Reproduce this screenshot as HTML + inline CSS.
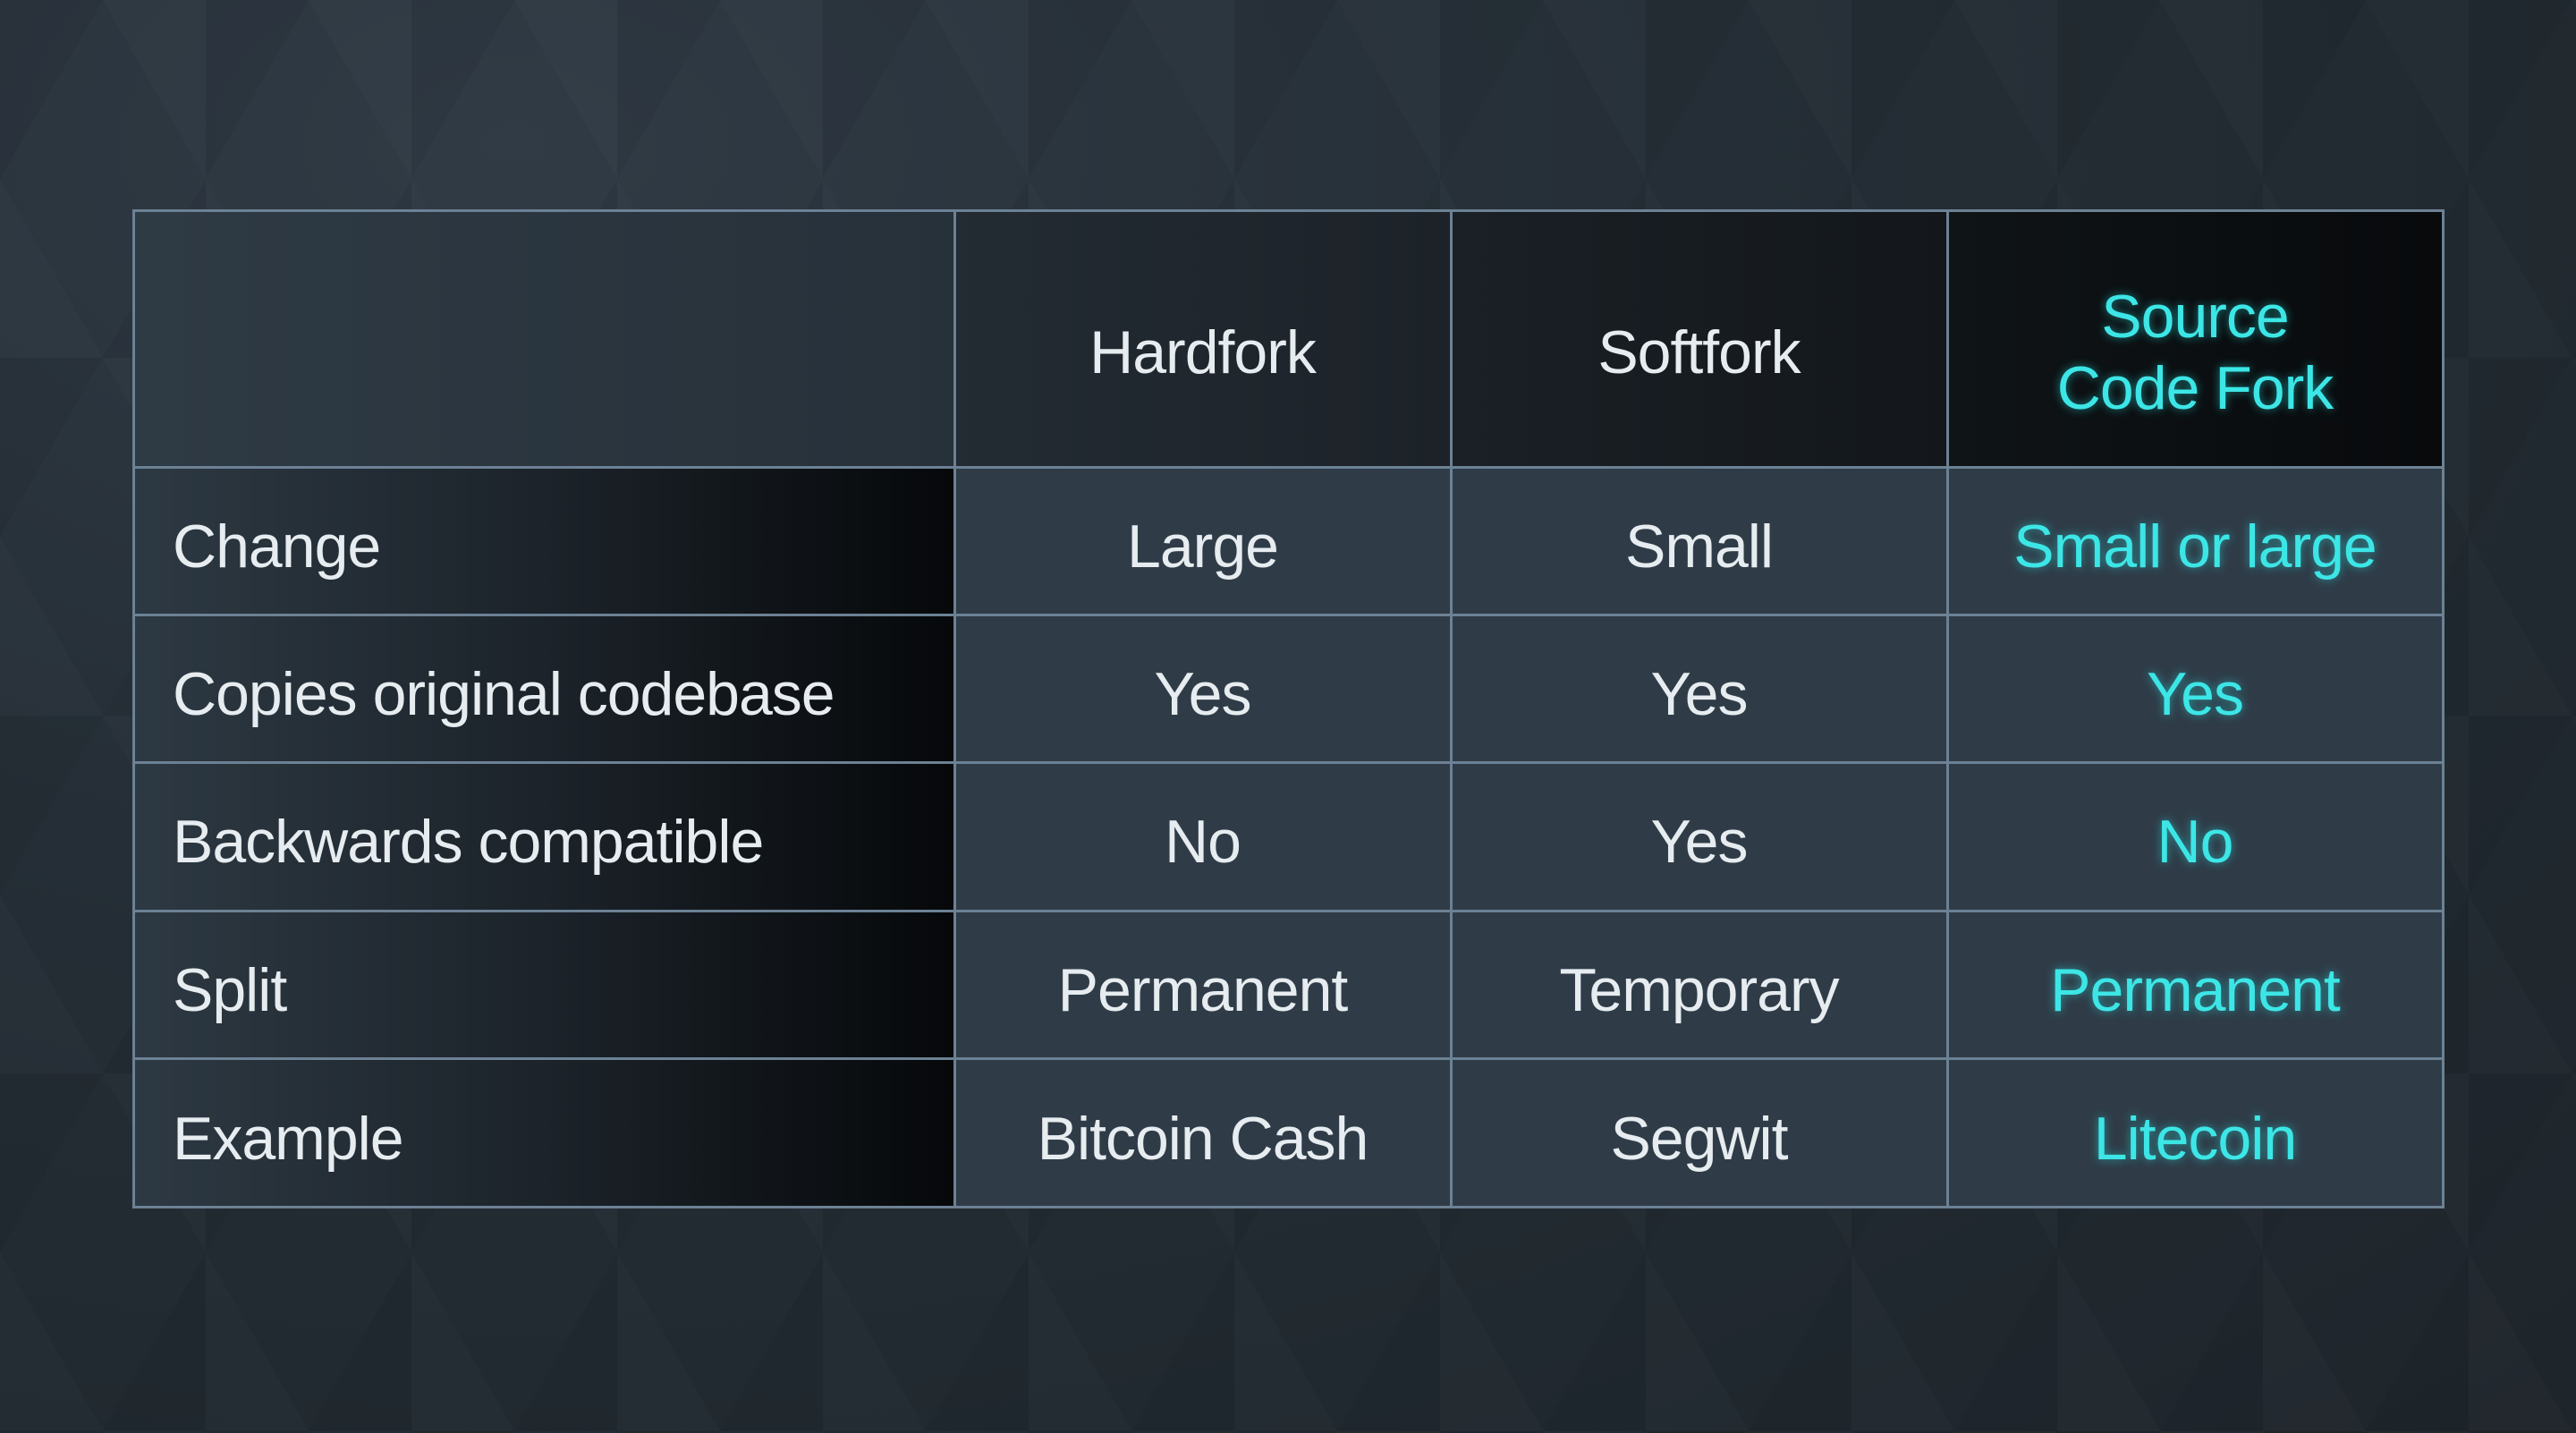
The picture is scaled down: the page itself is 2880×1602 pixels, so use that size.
<!DOCTYPE html>
<html><head><meta charset="utf-8"><style>
html,body{margin:0;padding:0}
body{width:2880px;height:1602px;overflow:hidden;position:relative;
background:radial-gradient(ellipse at 20% 10%,#303b45 0%,#252e36 40%,#1e252b 100%);
font-family:"Liberation Sans",sans-serif;}
.tex{position:absolute;inset:0;background:
linear-gradient(60deg,rgba(255,255,255,0.015) 25%,transparent 25%,transparent 75%,rgba(255,255,255,0.015) 75%),
linear-gradient(-60deg,rgba(0,0,0,0.05) 25%,transparent 25%,transparent 75%,rgba(0,0,0,0.05) 75%);
background-size:230px 400px;}
.c{position:absolute;box-sizing:border-box;display:flex;align-items:center;justify-content:center;
color:#e6ecef;font-size:68px;letter-spacing:-1px;text-align:center;line-height:80px;padding-top:12px}
.l{justify-content:flex-start;padding-left:44px;background:linear-gradient(90deg,#2d3943,#1c232a 50%,#06080a)}
.d{background:#2f3c48}
.cy{color:#3de6e6;text-shadow:0 0 10px rgba(40,220,220,0.6)}
.hd{padding-top:30px}
.h{position:absolute;background:#6c8194}
</style></head><body>
<div class="tex"></div>
<!-- header -->
<div class="c" style="left:149px;top:235px;width:918px;height:287px;background:linear-gradient(90deg,#2e3a44,#27313a)"></div>
<div class="c hd" style="left:1067px;top:235px;width:555px;height:287px;background:linear-gradient(90deg,#232b33,#1c2228)">Hardfork</div>
<div class="c hd" style="left:1622px;top:235px;width:555px;height:287px;background:linear-gradient(90deg,#1a2026,#13171b)">Softfork</div>
<div class="c cy hd" style="left:2177px;top:235px;width:554px;height:287px;background:linear-gradient(90deg,#0f1417,#080a0c)">Source<br>Code Fork</div>
<!-- rows -->
<div class="c l" style="left:149px;top:522px;width:918px;height:165px">Change</div>
<div class="c d" style="left:1067px;top:522px;width:555px;height:165px">Large</div>
<div class="c d" style="left:1622px;top:522px;width:555px;height:165px">Small</div>
<div class="c d cy" style="left:2177px;top:522px;width:554px;height:165px">Small or large</div>

<div class="c l" style="left:149px;top:687px;width:918px;height:165px">Copies original codebase</div>
<div class="c d" style="left:1067px;top:687px;width:555px;height:165px">Yes</div>
<div class="c d" style="left:1622px;top:687px;width:555px;height:165px">Yes</div>
<div class="c d cy" style="left:2177px;top:687px;width:554px;height:165px">Yes</div>

<div class="c l" style="left:149px;top:852px;width:918px;height:166px">Backwards compatible</div>
<div class="c d" style="left:1067px;top:852px;width:555px;height:166px">No</div>
<div class="c d" style="left:1622px;top:852px;width:555px;height:166px">Yes</div>
<div class="c d cy" style="left:2177px;top:852px;width:554px;height:166px">No</div>

<div class="c l" style="left:149px;top:1018px;width:918px;height:165px">Split</div>
<div class="c d" style="left:1067px;top:1018px;width:555px;height:165px">Permanent</div>
<div class="c d" style="left:1622px;top:1018px;width:555px;height:165px">Temporary</div>
<div class="c d cy" style="left:2177px;top:1018px;width:554px;height:165px">Permanent</div>

<div class="c l" style="left:149px;top:1183px;width:918px;height:167px">Example</div>
<div class="c d" style="left:1067px;top:1183px;width:555px;height:167px">Bitcoin Cash</div>
<div class="c d" style="left:1622px;top:1183px;width:555px;height:167px">Segwit</div>
<div class="c d cy" style="left:2177px;top:1183px;width:554px;height:167px">Litecoin</div>
<!-- grid lines -->
<div class="h" style="left:148px;top:234px;width:2584px;height:3px"></div>
<div class="h" style="left:148px;top:521px;width:2584px;height:3px"></div>
<div class="h" style="left:148px;top:686px;width:2584px;height:3px"></div>
<div class="h" style="left:148px;top:851px;width:2584px;height:3px"></div>
<div class="h" style="left:148px;top:1017px;width:2584px;height:3px"></div>
<div class="h" style="left:148px;top:1182px;width:2584px;height:3px"></div>
<div class="h" style="left:148px;top:1348px;width:2584px;height:3px"></div>
<div class="h" style="left:148px;top:234px;width:3px;height:1117px"></div>
<div class="h" style="left:1066px;top:234px;width:3px;height:1117px"></div>
<div class="h" style="left:1621px;top:234px;width:3px;height:1117px"></div>
<div class="h" style="left:2176px;top:234px;width:3px;height:1117px"></div>
<div class="h" style="left:2730px;top:234px;width:3px;height:1117px"></div>
</body></html>
